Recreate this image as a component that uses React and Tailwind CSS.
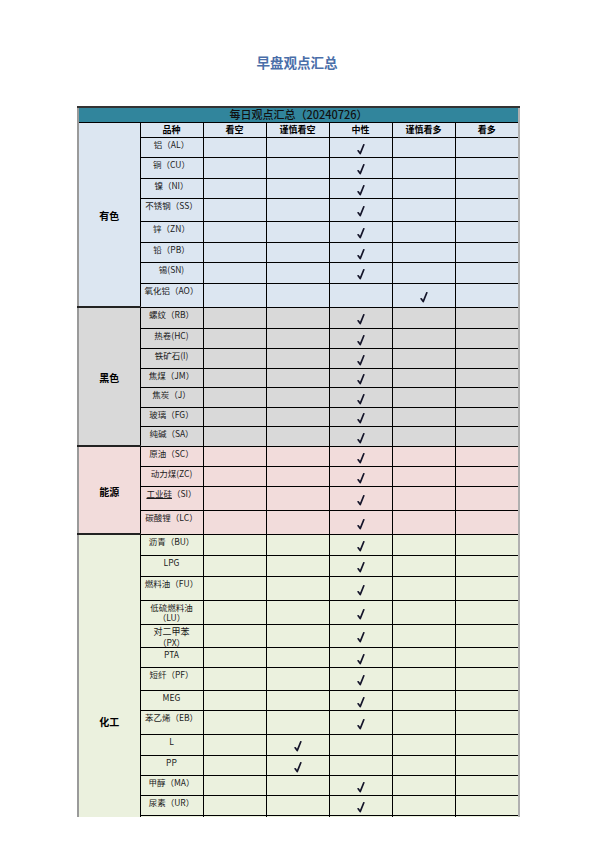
import React from "react";

const sections = [
  {
    name: "有色",
    bg: "bg-[#dce6f1]",
    labelClass: "align-middle pb-[12px]",
    rows: [
      ["铝（AL）", 2, 20],
      ["铜（CU）", 2, 21],
      ["镍（NI）", 2, 20],
      ["不锈钢（SS）", 2, 23],
      ["锌（ZN）", 2, 21],
      ["铅（PB）", 2, 20],
      ["锡(SN)", 2, 21],
      ["氧化铝（AO）", 3, 24],
    ],
  },
  {
    name: "黑色",
    bg: "bg-[#d9d9d9]",
    labelClass: "align-middle pt-[2px]",
    rows: [
      ["螺纹（RB）", 2, 21],
      ["热卷(HC)", 2, 20],
      ["铁矿石(I)", 2, 20],
      ["焦煤（JM）", 2, 19],
      ["焦炭（J）", 2, 20],
      ["玻璃（FG）", 2, 19],
      ["纯碱（SA）", 2, 20],
    ],
  },
  {
    name: "能源",
    bg: "bg-[#f2dcdb]",
    labelClass: "align-middle pt-[4px]",
    rows: [
      ["原油（SC）", 2, 20],
      ["动力煤(ZC)", 2, 20],
      ["工业硅（SI）", 2, 24, true],
      ["碳酸锂（LC）", 2, 24],
    ],
  },
  {
    name: "化工",
    bg: "bg-[#ebf1de]",
    labelClass: "align-top pt-[181px]",
    rows: [
      ["沥青（BU）", 2, 21],
      ["LPG", 2, 21],
      ["燃料油（FU）", 2, 24],
      ["低硫燃料油（LU）", 2, 24],
      ["对二甲苯（PX）", 2, 22],
      ["PTA", 2, 20],
      ["短纤（PF）", 2, 23],
      ["MEG", 2, 20],
      ["苯乙烯（EB）", 2, 24],
      ["L", 1, 21],
      ["PP", 1, 20],
      ["甲醇（MA）", 2, 20],
      ["尿素（UR）", 2, 20],
      ["PVC", 2, 20],
    ],
  },
];

const heads = ["品种", "看空", "谨慎看空", "中性", "谨慎看多", "看多"];

function Check() {
  return (
    <svg width="8" height="11" viewBox="0 0 8 11" className="inline-block">
      <path
        d="M1.2 6.8 L3.2 9.6 L6.8 0.8"
        fill="none"
        stroke="#15152a"
        strokeWidth="1.7"
        strokeLinecap="round"
        strokeLinejoin="round"
      />
    </svg>
  );
}

function VarietyText({ text, underline }) {
  if (text === "低硫燃料油（LU）") {
    return (
      <span className="block leading-[10px]">
        低硫燃料油
        <br />
        （LU）
      </span>
    );
  }
  if (text === "对二甲苯（PX）") {
    return (
      <span className="block leading-[10px]">
        <span className="text-[9px]">对二甲苯</span>
        <br />
        （PX）
      </span>
    );
  }
  if (underline) {
    return (
      <>
        <span className="underline">工业硅</span>（SI）
      </>
    );
  }
  return text;
}

export default function App() {
  return (
    <div
      className="w-[595px] h-[842px] bg-white overflow-hidden"
      style={{ fontFamily: '"Noto Sans CJK SC", "Liberation Sans", sans-serif' }}
    >
      <div className="pt-[53px] h-[106px]">
        <div className="text-center text-[13.5px] font-bold leading-[18px] text-[#4a6ea9] pr-[1px]">
          早盘观点汇总
        </div>
      </div>
      <div className="ml-[77px] w-[443px] h-[711px] overflow-hidden">
        <table className="table-fixed border-collapse w-[441px] text-black border-l-2 border-l-[#9a9a9a] border-r-2 border-r-[#b0b0b0]">
          <colgroup>
            <col className="w-[62px]" />
            <col className="w-[63px]" />
            <col className="w-[63px]" />
            <col className="w-[63px]" />
            <col className="w-[63px]" />
            <col className="w-[63px]" />
            <col className="w-[64px]" />
          </colgroup>
          <tbody>
            <tr className="h-[15px]">
              <td
                colSpan={7}
                className="bg-[#31859c] border-t-2 border-t-[#333] border-b border-b-black text-center text-[11px] font-medium leading-[13px] p-0 text-[#111]"
              >
                每日观点汇总（20240726）
              </td>
            </tr>
            <tr className="h-[15px] bg-[#dce6f1]">
              <td className="p-0 border-r border-r-black"></td>
              {heads.map((h) => (
                <td
                  key={h}
                  className="p-0 border border-black text-center text-[9px] font-bold leading-[11px]"
                >
                  {h}
                </td>
              ))}
            </tr>
            {sections.map((s) =>
              s.rows.map(([name, col, h, ul], i) => (
                <tr key={s.name + name} className={s.bg} style={{ height: h }}>
                  {i === 0 && (
                    <td
                      rowSpan={s.rows.length}
                      className={`p-0 text-center text-[10px] font-bold leading-[12px] border-r border-r-black border-b-2 border-b-[#222] ${s.labelClass}`}
                    >
                      {s.name}
                    </td>
                  )}
                  <td className="p-0 pt-[1px] align-top text-center text-[8.5px] leading-[10px] text-[#1a1a1a] border border-black">
                    <VarietyText text={name} underline={ul} />
                  </td>
                  {[0, 1, 2, 3, 4].map((c) => (
                    <td
                      key={c}
                      className="p-0 pt-[2px] align-middle text-center border border-black leading-[11px]"
                    >
                      {c === col ? <Check /> : null}
                    </td>
                  ))}
                </tr>
              ))
            )}
          </tbody>
        </table>
      </div>
    </div>
  );
}
